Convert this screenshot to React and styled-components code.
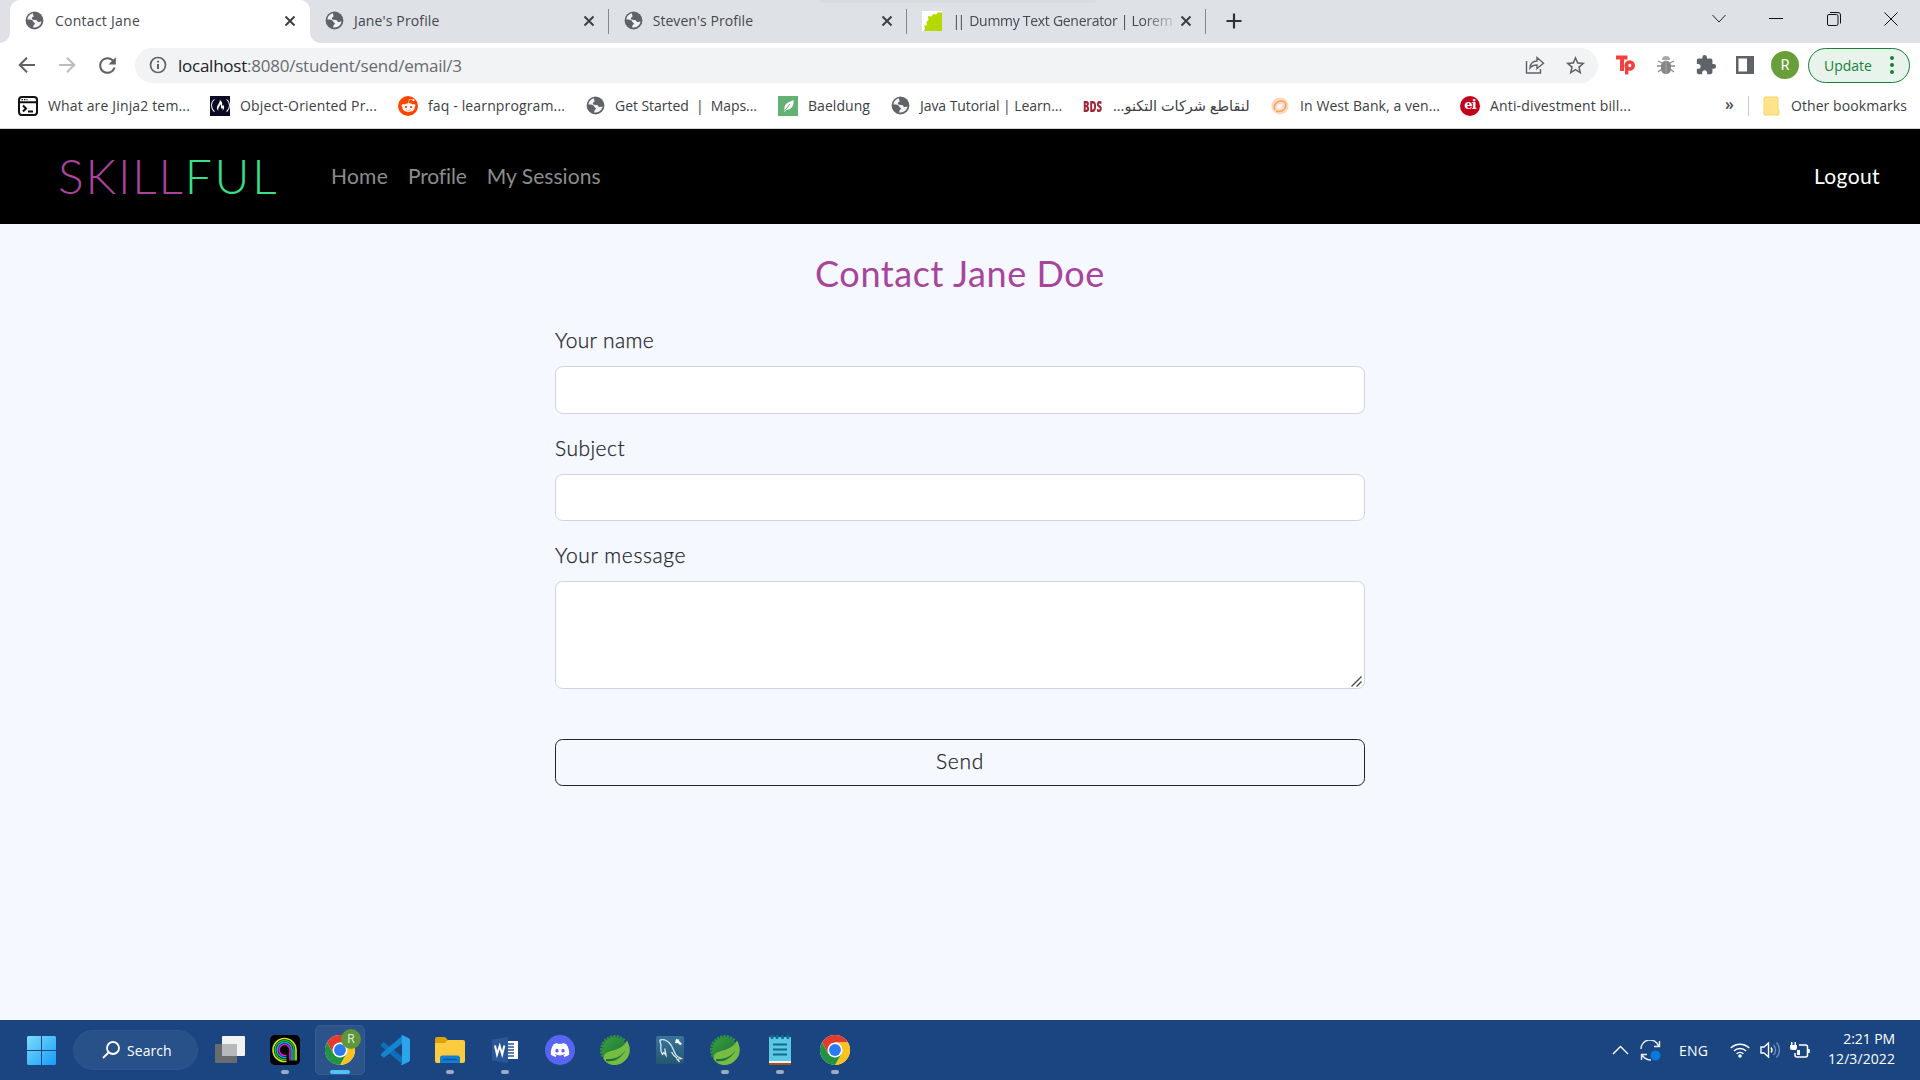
import React from "react";
import styled, { createGlobalStyle, css } from "styled-components";
import { FaDiscord, FaRedditAlien, FaFreeCodeCamp } from "react-icons/fa";
import { MdExtension, MdStarBorder, MdRefresh } from "react-icons/md";
import { TbBrandMysql } from "react-icons/tb";

const UI = `"Open Sans", "Noto Sans", "DejaVu Sans", sans-serif`;
const PAGE = `Lato, "Open Sans", sans-serif`;

const GlobalStyle = createGlobalStyle`
  *, *::before, *::after { box-sizing: border-box; }
  html, body { margin: 0; padding: 0; background: #f5f8ff; overflow: hidden; }
  svg { display: block; flex: none; }
`;

const Screen = styled.div`
  width: 1920px;
  height: 1080px;
  display: flex;
  flex-direction: column;
  font-family: ${UI};
  background: #f5f8ff;
  position: relative;
`;

const T = styled.span`
  white-space: pre;
  font-size: ${(p) => p.$size || 14}px;
  letter-spacing: ${(p) => p.$ls || 0}px;
  color: ${(p) => p.$c || "inherit"};
`;

/* ---------- browser tabs ---------- */
const TabStrip = styled.div`
  height: 43px;
  flex: none;
  display: flex;
  background: #dee1e6;
  padding-left: 10px;
`;
const Tab = styled.div`
  width: ${(p) => (p.$active ? 300 : 298.7)}px;
  height: 43px;
  display: flex;
  align-items: center;
  padding: 0 14px 2px 15px;
  color: #45494d;
  position: relative;
  background: ${(p) => (p.$active ? "#fff" : "transparent")};
  border-radius: 10px 10px 0 0;
  ${(p) =>
    p.$active &&
    css`
      &::before, &::after {
        content: "";
        position: absolute;
        bottom: 0;
        width: 10px;
        height: 10px;
      }
      &::before { left: -10px; background: radial-gradient(circle at 0 0, transparent 9.5px, #fff 10px); }
      &::after { right: -10px; background: radial-gradient(circle at 100% 0, transparent 9.5px, #fff 10px); }
    `}
`;
const TabTitle = styled.div`
  flex: 1;
  margin-left: ${(p) => p.$gap || 11}px;
  margin-right: 8px;
  display: flex;
  ${(p) => p.$fade && css`
    mask-image: linear-gradient(90deg, #000 190px, rgba(0, 0, 0, 0.25) 218px);
  `}
`;
const TabDivider = styled.div`
  width: 1px;
  height: 25px;
  margin: 9px -1px 0 0;
  background: #84878b;
  position: relative;
  left: -1px;
`;
const NewTab = styled.div`
  width: 55px;
  height: 42px;
  display: grid;
  place-items: center;
`;
const WindowButtons = styled.div`
  margin-left: auto;
  display: flex;
  height: 37px;
`;
const WinButton = styled.div`
  width: 57.5px;
  display: grid;
  place-items: center;
`;
const Peek = styled.div`
  position: absolute;
  left: 820px;
  top: 0;
  width: 276px;
  height: 3px;
  border-radius: 0 0 8px 8px;
  background: #dadbe0;
`;

/* ---------- toolbar ---------- */
const Toolbar = styled.div`
  height: 45px;
  flex: none;
  display: flex;
  align-items: center;
  background: #fff;
  padding: 0 10px 1px 7px;
`;
const ToolButton = styled.div`
  width: ${(p) => p.$w || 40}px;
  height: 40px;
  display: grid;
  place-items: center;
  color: #5f6368;
`;
const AddressBar = styled.div`
  width: 1463px;
  height: 35px;
  margin-left: 8px;
  border-radius: 18px;
  background: #f1f3f4;
  display: flex;
  align-items: center;
  padding: 0 3px 0 14px;
`;
const Url = styled.div`
  flex: 1;
  margin-left: 11px;
  color: #676b70;
  display: flex;
`;
const Avatar = styled.div`
  width: 28px;
  height: 28px;
  margin: 0 9px 0 auto;
  border-radius: 50%;
  background: #689f38;
  color: #fff;
  display: grid;
  place-items: center;
  font: 14px Roboto, sans-serif;
`;
const UpdatePill = styled.div`
  width: 102px;
  height: 35px;
  border: 1px solid #188038;
  border-radius: 18px;
  background: #e8f3ec;
  color: #188038;
  display: flex;
  align-items: center;
  justify-content: space-between;
  padding: 0 15px;
`;

/* ---------- bookmarks ---------- */
const Bookmarks = styled.div`
  height: 41px;
  flex: none;
  display: flex;
  align-items: center;
  background: #fff;
  border-bottom: 1px solid #d4d4d6;
  padding: 0 0 5px 18px;
  color: #3c4043;
`;
const Bookmark = styled.div`
  width: ${(p) => p.$w}px;
  display: flex;
  align-items: center;
  gap: 10px;
`;
const BookmarkIcon = styled.div`
  width: 20px;
  height: 20px;
  display: grid;
  place-items: center;
  flex: none;
  background: ${(p) => p.$bg || "transparent"};
  color: #fff;
  border-radius: ${(p) => (p.$round ? "50%" : 0)};
`;
const BdsMark = styled.span`
  font: 800 16px/20px "Open Sans", sans-serif;
  color: #a32638;
  transform: scaleX(0.6);
  transform-origin: left;
`;
const EiMark = styled.span`
  font: 700 13px "DejaVu Serif", serif;
  letter-spacing: -0.8px;
  line-height: 16px;
  height: 18px;
  color: #fff;
`;
const Overflow = styled.div`
  margin-left: auto;
  width: 23px;
  font: 600 16px ${UI};
  line-height: 18px;
  padding-bottom: 4px;
  color: #4c5054;
`;
const BarDivider = styled.div`
  width: 1px;
  height: 20px;
  background: #c8cacc;
  margin-right: 14px;
`;

/* ---------- page ---------- */
const Navbar = styled.nav`
  height: 95px;
  flex: none;
  background: #000;
  display: flex;
  align-items: center;
  padding: 0 40px 2px 58px;
  font-family: ${PAGE};
`;
const Logo = styled.div`
  font-weight: 300;
  line-height: 60px;
  width: 273px;
  display: flex;
`;
const NavLinks = styled.div`
  display: flex;
  gap: 20px;
`;
const NavLink = styled.a`
  color: ${(p) => (p.$bright ? "#fff" : "#8c8c8c")};
  margin-left: ${(p) => (p.$bright ? "auto" : 0)};
`;
const Main = styled.main`
  flex: 1;
  display: flex;
  flex-direction: column;
  align-items: center;
  padding-top: 28px;
  font-family: ${PAGE};
`;
const Title = styled.h1`
  margin: 0 0 32px;
  height: 42px;
  line-height: 42px;
  font-weight: 400;
  color: #a8449c;
`;
const Form = styled.form`
  width: 810px;
  display: flex;
  flex-direction: column;
`;
const Label = styled.label`
  height: 30px;
  line-height: 28px;
  margin-bottom: 10px;
  font-weight: 300;
  color: #212529;
  -webkit-text-stroke: 0.25px #212529;
`;
const fieldBox = css`
  width: 100%;
  border: 1px solid #ced4da;
  border-radius: 7.5px;
  background: #fff;
  outline: none;
  display: block;
  padding: 7px 15px;
  font: 300 20px ${PAGE};
`;
const Input = styled.input`
  ${fieldBox}
  height: 47.5px;
  margin-bottom: 20px;
`;
const AreaWrap = styled.div`
  position: relative;
  height: 108px;
  margin-bottom: 50px;
`;
const Area = styled.textarea`
  ${fieldBox}
  height: 108px;
  resize: none;
`;
const Grip = styled.svg`
  position: absolute;
  right: 3px;
  bottom: 2px;
`;
const SendButton = styled.button`
  height: 47px;
  border: 1px solid #212529;
  border-radius: 7.5px;
  background: transparent;
  color: #212529;
  font: 300 20px ${PAGE};
  padding: 0 0 4px;
  -webkit-text-stroke: 0.25px #212529;
`;

/* ---------- taskbar ---------- */
const Taskbar = styled.div`
  height: 60px;
  flex: none;
  display: flex;
  align-items: center;
  padding: 0 25px 0 27px;
  background: #1a4580;
  color: #fff;
`;
const SearchPill = styled.div`
  width: 125px;
  height: 40px;
  margin: 0 7px 0 17px;
  border-radius: 20px;
  background: #28518a;
  border: 1px solid #2c558d;
  display: flex;
  align-items: center;
  gap: 7px;
  padding-left: 28px;
`;
const TaskButton = styled.div`
  width: 50px;
  height: 50px;
  margin-right: 5px;
  border-radius: 5px;
  display: grid;
  place-items: center;
  position: relative;
  background: ${(p) => (p.$active ? "#2c548b" : "transparent")};
  border: 1px solid ${(p) => (p.$active ? "#365d92" : "transparent")};
  &::after {
    content: "";
    position: absolute;
    bottom: 0;
    left: 50%;
    transform: translateX(-50%);
    height: 4px;
    border-radius: 2px;
    width: ${(p) => (p.$active ? 20 : p.$open ? 8 : 0)}px;
    background: ${(p) => (p.$active ? "#4cc2ff" : "#9aabc7")};
  }
`;
const Badge = styled.span`
  position: absolute;
  left: 25px;
  top: 3px;
  width: 20px;
  height: 20px;
  border-radius: 50%;
  background: #5f9637;
  color: #dfe9d8;
  font: 12px/20px Roboto, sans-serif;
  text-align: center;
`;
const Tray = styled.div`
  margin-left: auto;
  display: flex;
  align-items: center;
`;
const TrayItem = styled.div`
  width: ${(p) => p.$w}px;
  display: flex;
`;
const Clock = styled.div`
  width: 85px;
  display: flex;
  flex-direction: column;
  align-items: flex-end;
  line-height: 20px;
  padding-bottom: 2px;
`;

/* ---------- icons ---------- */
const Globe = () => (
  <svg width="19" height="19" viewBox="0 0 19 19">
    <circle cx="9.5" cy="9.5" r="8.9" fill="#5f6368" />
    <path d="M8.200 2.300C5 2.700 2.600 5.600 2.500 8.600c1.600.2 3.200.1 4.600.7 1.300.5.9 2 2.300 2.500.9.400.6 1.500-.3 1.900-.9.500-.6 1.800-1 2.700 1.600.4 3.300.1 4.700-.6 2.100-1.100 3.500-3.200 3.700-5.500-1 .7-2.200 1.100-3.300.6-1-.5-1.200-1.700-2.300-1.900-1.300-.2-2.700.2-3.700-.7-.8-.8-.1-1.900.8-2.200.9-.4.5-1.500.2-2.100-.3-.6-.3-1.200 0-1.700z" fill="#f1f2f4" />
  </svg>
);
const Close = () => (
  <svg width="12" height="12" viewBox="0 0 12 12">
    <path d="M1.500 1.500l9 9M10.500 1.500l-9 9" stroke="#3c4043" strokeWidth="2" />
  </svg>
);
const BackIcon = () => (
  <svg width="18" height="18" viewBox="0 0 18 18">
    <path d="M17 9H2M9 1.700L1.700 9 9 16.300" fill="none" stroke="#5f6368" strokeWidth="2" />
  </svg>
);
const ForwardIcon = () => (
  <svg width="18" height="18" viewBox="0 0 18 18">
    <path d="M1 9h15M9 1.700L16.300 9 9 16.300" fill="none" stroke="#bbbdbf" strokeWidth="2" />
  </svg>
);
const Chrome = () => (
  <svg width="30" height="30" viewBox="0 0 48 48">
    <circle cx="24" cy="24" r="24" fill="#fff" />
    <path d="M24 12h20.800A24 24 0 0 0 3.200 12l10.400 18z" fill="#e33b2e" />
    <path d="M34.400 30L24 48A24 24 0 0 0 44.800 12H24z" fill="#fcc31e" />
    <path d="M13.600 30L3.200 12A24 24 0 0 0 24 48l10.400-18z" fill="#229342" />
    <circle cx="24" cy="24" r="12" fill="#fff" />
    <circle cx="24" cy="24" r="9.500" fill="#2a7bee" />
  </svg>
);
const Spring = ({ id }) => {
  const teeth = Array.from({ length: 12 }, (_, i) => 246 + i * 14);
  return (
    <svg width="30" height="30" viewBox="0 0 30 30">
      <defs>
        <linearGradient id={id} x1="0" y1="0" x2="1" y2="1">
          <stop offset="0" stopColor="#3a9f3c" />
          <stop offset="1" stopColor="#166b3c" />
        </linearGradient>
      </defs>
      {teeth.map((a) => (
        <rect key={a} x="13.700" y="0" width="2.400" height="5" fill="#348f3c" transform={`rotate(${a} 15 15)`} />
      ))}
      <circle cx="15" cy="15" r="12.700" fill={`url(#${id})`} />
      <path d="M27 5.500c3.500 6 4 13-.5 18.500-5.500 7-15 8-20.500 3-1-1-2-2-2.500-3C3 19 7 17 11 16c6.500-1.500 12-3.500 16-10.500z" fill="#76bc43" />
      <path d="M6 24c8 .5 15-2 19.500-9C22 22.500 15 27.500 6 26z" fill="#17743a" />
    </svg>
  );
};
const Share = () => (
  <svg width="20" height="20" viewBox="0 0 20 20" fill="none" stroke="#5f6368" strokeWidth="1.400">
    <path d="M1.500 6v12h14v-4" />
    <path d="M5 13c.5-5 3.500-7 7-7V2.500l6.500 5.800-6.500 5.200V10c-3 0-5 .5-7 3z" />
  </svg>
);
const Bug = () => (
  <svg width="20" height="20" viewBox="0 0 20 20">
    <path d="M2 6l4 2M18 6l-4 2M1 11h5M19 11h-5M2 17l4-3M18 17l-4-3" stroke="#8c8c8c" strokeWidth="1.300" />
    <path d="M6 5a4 4 0 0 1 8 0z" fill="#a8a8a8" />
    <rect x="5" y="5.800" width="10" height="13.500" rx="5" fill="#868686" />
    <path d="M10 6v13" stroke="#a5a5a5" />
  </svg>
);
const PanelIcon = () => (
  <svg width="18" height="18" viewBox="0 0 18 18">
    <path fillRule="evenodd" d="M0 0h18v18H0zM2.500 2.500v13H11v-13z" fill="#5f6368" />
  </svg>
);
const TpIcon = () => (
  <svg width="20" height="20" viewBox="0 0 20 20" fill="none" stroke="#f5413d" strokeWidth="4">
    <path d="M0 2.500h11.500M6 2v14" />
    <circle cx="13.700" cy="10.500" r="3.500" strokeWidth="3.600" />
    <path d="M10.700 9v10.500" strokeWidth="3.400" />
  </svg>
);
const VsCode = () => (
  <svg width="30" height="30" viewBox="0 0 30 30">
    <path d="M1 9.500l2-1.700c.5-.4 1-.3 1.500 0L22 21.500V29L.8 11c-.4-.5-.3-1 .2-1.500z" fill="#0f6fb8" />
    <path d="M1 20.500l2 1.700c.5.400 1 .3 1.500 0L22 8.500V1L.8 19c-.4.500-.3 1 .2 1.500z" fill="#1485cf" />
    <path d="M22 0l6.500 3c1 .5 1.500 1.200 1.500 2v20c0 .8-.5 1.500-1.500 2L22 30c-.8 0-1.400-.3-2-.9 1 .7 2 .2 2-1V1.900c0-1.200-1-1.700-2-1 .6-.6 1.200-.9 2-.9z" fill="#2ba4ee" />
  </svg>
);
const Explorer = () => (
  <svg width="30" height="28" viewBox="0 0 30 28">
    <path d="M0 3a2 2 0 0 1 2-2h8l3 3h15v6H0z" fill="#e0a106" />
    <path d="M0 7h10l3-3h15a2 2 0 0 1 2 2v19a2 2 0 0 1-2 2H2a2 2 0 0 1-2-2z" fill="#fdcb3f" />
    <path d="M5 27v-5a2.500 2.500 0 0 1 2.500-2.500h15A2.500 2.500 0 0 1 25 22v5z" fill="#1180d4" />
    <path d="M8 23.500h14" stroke="#0b559b" strokeWidth="1.500" />
  </svg>
);
const Word = () => (
  <svg width="28" height="28" viewBox="0 0 28 28">
    <path d="M15 5h12v18H15z" fill="#fff" />
    <path d="M15 8h8M15 11h8M15 14h8M15 17h8M15 20h8" stroke="#2b579a" strokeWidth="1.400" />
    <path d="M1 3.500L17 1v26L1 24.500z" fill="#2b579a" />
    <path d="M4 9.500l2 9 2.700-8.500 2.500 8.500 2.200-9" fill="none" stroke="#fff" strokeWidth="2" />
  </svg>
);
const Notepad = () => (
  <svg width="24" height="30" viewBox="0 0 24 30">
    <path d="M1 24h22v6H1z" fill="#a2531a" />
    <path d="M1 24h22v4H1z" fill="#f1f1f1" />
    <path d="M1 2h22v24H1z" fill="#5cc8e4" />
    <path d="M4 0v4M9 0v4M14.500 0v4M20 0v4" stroke="#0a6f90" strokeWidth="2.600" />
    <path d="M5 9.500h14M5 14.500h14M5 19.500h14" stroke="#0f6c8d" strokeWidth="2" />
  </svg>
);
const Rings = () => (
  <svg width="30" height="30" viewBox="0 0 30 30" fill="none">
    <rect width="30" height="30" rx="5" fill="#000" />
    {[[11.5, "#d8e619"], [9.5, "#16c33a"], [7.5, "#16a5d8"], [5.5, "#e21bd0"]].map(([r, c]) => (
      <path key={r} d={`M${14.5 + r} 25.500V15A${r} ${r} 0 1 0 14.500 ${15 + r}h2`} stroke={c} strokeWidth="1.600" />
    ))}
  </svg>
);
const TaskView = () => (
  <svg width="30" height="28" viewBox="0 0 30 28">
    <rect x="0" y="8" width="22" height="19" rx="1" fill="#696b6e" />
    <rect x="7" y="0" width="23" height="20" rx="1" fill="#f2f2f2" />
    <path d="M7 8h15v12H7z" fill="#b7b8ba" />
  </svg>
);
const WindowsLogo = () => (
  <svg width="29" height="29" viewBox="0 0 29 29">
    <defs>
      <linearGradient id="win" x1="0" y1="0" x2="1" y2="1">
        <stop offset="0" stopColor="#7ddcfd" />
        <stop offset="1" stopColor="#149cf8" />
      </linearGradient>
    </defs>
    <path d="M1 0h13v14H0V1zM15 0h13l1 1v13H15zM0 15h14v14H1l-1-1zM15 15h14v13l-1 1H15z" fill="url(#win)" />
  </svg>
);
const Dolphin = () => (
  <svg width="26" height="26" viewBox="0 0 26 26" fill="none" stroke="#dce8f0" strokeWidth="1.300">
    <path d="M3 3c4-1 8 1 11 5 2 3 3 7 5 10 1 1.500 3 2.500 5 3.500l-4 .5 2.500 3M3 3c-.5 2 1 3.500 1 5.500-.5 3-.5 6 1.500 9l1.500-2 2 3c0-3-1.500-5-1-7M14.500 15c1 2 3 4.500 5.500 6" />
    <path d="M19 2.500l5 5M18.500 4.500c1.500 1 2.500 0 2.500-2" stroke="#fff" strokeWidth="2.400" />
  </svg>
);
const MysqlTile = styled.div`
  width: 28px;
  height: 28px;
  border-radius: 2px;
  display: grid;
  place-items: center;
  background: linear-gradient(#37759c, #24566f);
`;
const DiscordTile = styled.div`
  width: 30px;
  height: 30px;
  border-radius: 50%;
  display: grid;
  place-items: center;
  background: #5865f2;
`;

const bookmarks = [
  { w: 192, t: "What are Jinja2 tem...", ls: 0.154, icon: (
    <BookmarkIcon><svg width="20" height="20" viewBox="0 0 20 20" fill="none" stroke="#111" strokeWidth="2"><rect x="1" y="1" width="18" height="18" rx="3" /><path d="M1 6.300h18M5 9.500l3 3-3 3M10 15.500h5" /><path d="M3.500 3.700h6" strokeWidth="1.200" strokeDasharray="1.500 1" /></svg></BookmarkIcon>) },
  { w: 188, t: "Object-Oriented Pr...", ls: 0.15, icon: <BookmarkIcon $bg="#0a0a23"><FaFreeCodeCamp size={19} /></BookmarkIcon> },
  { w: 187, t: "faq - learnprogram...", ls: 0.14, icon: <BookmarkIcon $bg="#ff4500" $round><FaRedditAlien size={15} /></BookmarkIcon> },
  { w: 193, t: "Get Started  |  Maps...", ls: -0.05, icon: <BookmarkIcon><Globe /></BookmarkIcon> },
  { w: 112, t: "Baeldung", ls: 0.055, icon: (
    <BookmarkIcon $bg="#63b175"><svg width="14" height="14" viewBox="0 0 14 14"><path d="M12.500 1c.5 5-1 9-7 10L3 13l.5-2.500C3 5 6 4 12.500 1z" fill="#fff" /><path d="M3.500 12L9 5" stroke="#63b175" /></svg></BookmarkIcon>) },
  { w: 193, t: "Java Tutorial | Learn...", ls: -0.062, icon: <BookmarkIcon><Globe /></BookmarkIcon> },
  { w: 187, t: "لنقاطع شركات التكنو...", size: 14.5, rtl: true, icon: <BookmarkIcon><BdsMark>BDS</BdsMark></BookmarkIcon> },
  { w: 190, t: "In West Bank, a ven...", ls: 0.085, icon: (
    <BookmarkIcon><svg width="18" height="18" viewBox="0 0 18 18"><circle cx="9" cy="9" r="8.500" fill="#fbd9bd" /><path d="M4 13C1 7 8 2 14 5M14 5c3 6-3 11-9 9" stroke="#f2a46c" strokeWidth="1.500" fill="none" /><path d="M6 10c0-3 3-4 6-3-1 1-.5 4-3 5-1.500.5-3-.5-3-2z" fill="#fff4ea" /></svg></BookmarkIcon>) },
  { w: 200, t: "Anti-divestment bill...", ls: 0.16, icon: <BookmarkIcon $bg="#c4001a" $round><EiMark>ei</EiMark></BookmarkIcon> },
];

export default function App() {
  return (
    <Screen>
      <GlobalStyle />
      <TabStrip>
        <Tab $active><Globe /><TabTitle><T $ls={0.257}>Contact Jane</T></TabTitle><Close /></Tab>
        <Tab><Globe /><TabTitle $gap={10}><T $ls={0.14}>Jane's Profile</T></TabTitle><Close /></Tab>
        <TabDivider />
        <Tab><Globe /><TabTitle $gap={10}><T $ls={0.05}>Steven's Profile</T></TabTitle><Close /></Tab>
        <TabDivider />
        <Tab>
          <svg width="20" height="20" viewBox="0 0 20 20"><rect width="20" height="20" fill="#fff" /><path d="M2 20l1-3-1-2 3-1-.5-3 2-2-.5-4 3.500.5L11 3l3 .5L16 1.500h4V20z" fill="#b5d800" /></svg>
          <TabTitle $gap={10} $fade><T $ls={-2.6}>||</T><T $ls={-0.29}>{"  Dummy Text Generator | Lorem"}</T></TabTitle><Close />
        </Tab>
        <TabDivider />
        <NewTab><svg width="16" height="16" viewBox="0 0 16 16"><path d="M8 .5v15M.5 8h15" stroke="#303336" strokeWidth="2.200" /></svg></NewTab>
        <WindowButtons>
          <WinButton><svg width="14" height="9" viewBox="0 0 14 9"><path d="M.5 1L7 8l6.500-7" fill="none" stroke="#222" /></svg></WinButton>
          <WinButton><svg width="14" height="1" viewBox="0 0 14 1"><path d="M0 .5h14" stroke="#111" /></svg></WinButton>
          <WinButton><svg width="14" height="14" viewBox="0 0 14 14" fill="none" stroke="#111"><rect x=".5" y="2.500" width="10.500" height="11" rx="1.500" /><path d="M3 .5h8a2.500 2.500 0 0 1 2.500 2.500v8.500" /></svg></WinButton>
          <WinButton><svg width="14" height="14" viewBox="0 0 14 14"><path d="M.5.5l13 13M13.500.5l-13 13" stroke="#111" /></svg></WinButton>
        </WindowButtons>
      </TabStrip>
      <Peek />
      <Toolbar>
        <ToolButton><BackIcon /></ToolButton>
        <ToolButton><ForwardIcon /></ToolButton>
        <ToolButton><MdRefresh size={25} /></ToolButton>
        <AddressBar>
          <svg width="18" height="18" viewBox="0 0 18 18" fill="none" stroke="#5f6368" strokeWidth="1.700"><circle cx="9" cy="9" r="7.500" /><path d="M9 8v5M9 4.800v1.800" strokeWidth="2" /></svg>
          <Url><T $size={17} $c="#202124" $ls={-0.247}>localhost</T><T $size={17} $ls={-0.23}>:8080/student/send/email/3</T></Url>
          <ToolButton><Share /></ToolButton>
          <ToolButton><MdStarBorder size={23} /></ToolButton>
        </AddressBar>
        <ToolButton $w={55}><TpIcon /></ToolButton>
        <ToolButton $w={25}><Bug /></ToolButton>
        <ToolButton $w={56}><MdExtension size={22} /></ToolButton>
        <ToolButton $w={22}><PanelIcon /></ToolButton>
        <Avatar>R</Avatar>
        <UpdatePill>
          <T>Update</T>
          <svg width="4" height="18" viewBox="0 0 4 18" fill="#188038"><circle cx="2" cy="2" r="2" /><circle cx="2" cy="9" r="2" /><circle cx="2" cy="16" r="2" /></svg>
        </UpdatePill>
      </Toolbar>
      <Bookmarks>
        {bookmarks.map((b) => (
          <Bookmark key={b.t} $w={b.w}>{b.icon}<T $ls={b.ls} $size={b.size} dir={b.rtl ? "rtl" : "ltr"}>{b.t}</T></Bookmark>
        ))}
        <Overflow>»</Overflow>
        <BarDivider />
        <Bookmark $w={157}>
          <svg width="18" height="20" viewBox="0 0 18 20"><path d="M2 1h12a1 1 0 0 1 1 1v11l1 1v5H2a1 1 0 0 1-1-1V2a1 1 0 0 1 1-1z" fill="#ffe48c" stroke="#f6d365" /></svg>
          <T $ls={0.07}>Other bookmarks</T>
        </Bookmark>
      </Bookmarks>
      <Navbar>
        <Logo><T $size={48} $c="#a8449c" $ls={1.9}>SKILL</T><T $size={48} $c="#37e08a" $ls={2.7}>FUL</T></Logo>
        <NavLinks>
          <NavLink><T $size={21} $ls={0.25}>Home</T></NavLink>
          <NavLink><T $size={21} $ls={-0.15}>Profile</T></NavLink>
          <NavLink><T $size={21} $ls={0.05}>My Sessions</T></NavLink>
        </NavLinks>
        <NavLink $bright><T $size={21} $ls={0.38}>Logout</T></NavLink>
      </Navbar>
      <Main>
        <Title><T $size={36} $ls={0.6}>Contact Jane Doe</T></Title>
        <Form>
          <Label><T $size={21} $ls={0.36}>Your name</T></Label>
          <Input />
          <Label><T $size={21} $ls={0.46}>Subject</T></Label>
          <Input />
          <Label><T $size={21} $ls={0.62}>Your message</T></Label>
          <AreaWrap>
            <Area />
            <Grip width="11" height="11" viewBox="0 0 11 11"><path d="M.5 10.500l10-10M5.500 10.500l5-5" stroke="#4a4a4a" strokeWidth="1.400" /></Grip>
          </AreaWrap>
          <SendButton type="button"><T $size={21} $ls={0.68}>Send</T></SendButton>
        </Form>
      </Main>
      <Taskbar>
        <WindowsLogo />
        <SearchPill>
          <svg width="18" height="18" viewBox="0 0 18 18" fill="none" stroke="#fff" strokeWidth="1.800"><circle cx="11" cy="7" r="6" /><path d="M6.500 11.500L1 17" /></svg>
          <T $ls={0.05}>Search</T>
        </SearchPill>
        <TaskButton><TaskView /></TaskButton>
        <TaskButton $open><Rings /></TaskButton>
        <TaskButton $active><Chrome /><Badge>R</Badge></TaskButton>
        <TaskButton><VsCode /></TaskButton>
        <TaskButton $open><Explorer /></TaskButton>
        <TaskButton $open><Word /></TaskButton>
        <TaskButton><DiscordTile><FaDiscord size={20} /></DiscordTile></TaskButton>
        <TaskButton><Spring id="leafA" /></TaskButton>
        <TaskButton><MysqlTile><Dolphin /></MysqlTile></TaskButton>
        <TaskButton $open><Spring id="leafB" /></TaskButton>
        <TaskButton $open><Notepad /></TaskButton>
        <TaskButton $open><Chrome /></TaskButton>
        <Tray>
          <TrayItem $w={28}><svg width="17" height="10" viewBox="0 0 17 10"><path d="M1 9l7.500-7.500L16 9" fill="none" stroke="#fff" strokeWidth="1.400" /></svg></TrayItem>
          <TrayItem $w={39}><svg width="21" height="21" viewBox="0 0 21 21" fill="none" stroke="#e8eef6" strokeWidth="1.400"><path d="M1 9a9 9 0 0 1 17.500-3M19.500 1v5.500H14M1.500 20v-5.500H7M2 15c2 3 5 5 9 5" /><circle cx="15.500" cy="15.500" r="5" fill="#0a7ae0" stroke="none" /></svg></TrayItem>
          <TrayItem $w={51}><T $ls={0.167}>ENG</T></TrayItem>
          <TrayItem $w={30}><svg width="20" height="16" viewBox="0 0 20 16" fill="none" stroke="#fff" strokeWidth="1.500"><path d="M.8 6a13 13 0 0 1 18.400 0M3.800 9a9 9 0 0 1 12.400 0M6.600 11.800a5 5 0 0 1 6.800 0" /><circle cx="10" cy="14" r="1.800" fill="#fff" stroke="none" /></svg></TrayItem>
          <TrayItem $w={30}><svg width="21" height="18" viewBox="0 0 21 18" fill="none" stroke="#fff" strokeWidth="1.400"><path d="M1 6v6h3l4.500 4V2L4 6z" /><path d="M11 6.500a4 4 0 0 1 0 5" /><path d="M13.500 4a7 7 0 0 1 0 10M16.500 1.500a11 11 0 0 1 0 15" stroke="#6f8db5" /></svg></TrayItem>
          <TrayItem $w={20}><svg width="20" height="17" viewBox="0 0 20 17" fill="none" stroke="#fff" strokeWidth="1.500"><path d="M9 3h6.500a2 2 0 0 1 2 2v8a2 2 0 0 1-2 2H7a2 2 0 0 1-2-2v-2M19 7v4" /><path d="M0 3h7v3a2 2 0 0 1-2 2H2a2 2 0 0 1-2-2zM1 0h1.500v3H1zM4.500 0H6v3H4.500zM7 8h3v5H7z" fill="#fff" stroke="none" /></svg></TrayItem>
          <Clock><T $ls={-0.1}>2:21 PM</T><T $ls={0.076}>12/3/2022</T></Clock>
        </Tray>
      </Taskbar>
    </Screen>
  );
}
